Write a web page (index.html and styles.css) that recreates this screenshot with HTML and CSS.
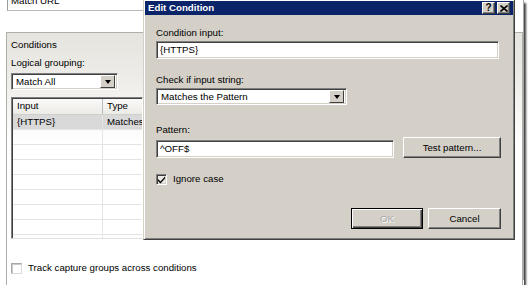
FILE: index.html
```html
<!DOCTYPE html>
<html lang="en">
<head>
  <meta charset="UTF-8" />
  <title>Edit Condition</title>
  <link rel="stylesheet" href="styles.css">
</head>
<body>
  <div class="screen">
    <!-- Rule editor behind the dialog -->
    <div class="window">
      <div class="match-url"><span>Match URL</span></div>

      <div class="group">
        <div class="group-title">Conditions</div>
        <div class="label">Logical grouping:</div>
        <div class="select select-small">
          <span class="select-text">Match All</span>
          <span class="drop"><span class="arrow"></span></span>
        </div>

        <div class="grid">
          <div class="grid-row grid-head">
            <div class="cell cell-input">Input</div>
            <div class="cell">Type</div>
          </div>
          <div class="grid-row grid-sel">
            <div class="cell cell-input">{HTTPS}</div>
            <div class="cell">Matches</div>
          </div>
          <div class="grid-row"><div class="cell cell-input"></div><div class="cell"></div></div>
          <div class="grid-row"><div class="cell cell-input"></div><div class="cell"></div></div>
          <div class="grid-row"><div class="cell cell-input"></div><div class="cell"></div></div>
          <div class="grid-row"><div class="cell cell-input"></div><div class="cell"></div></div>
          <div class="grid-row"><div class="cell cell-input"></div><div class="cell"></div></div>
          <div class="grid-row"><div class="cell cell-input"></div><div class="cell"></div></div>
          <div class="grid-row"><div class="cell cell-input"></div><div class="cell"></div></div>
          <div class="grid-row"><div class="cell cell-input"></div><div class="cell"></div></div>
        </div>

        <div class="check-row track">
          <span class="check check-off"></span>
          <span>Track capture groups across conditions</span>
        </div>
      </div>
    </div>

    <!-- Modal dialog -->
    <div class="dialog">
      <div class="titlebar">
        <span class="title">Edit Condition</span>
        <span class="tb-btn tb-help">?</span>
        <span class="tb-btn tb-close">
          <svg width="8" height="7" viewBox="0 0 8 7"><path d="M0.5 0.5 L7.5 6.5 M7.5 0.5 L0.5 6.5" stroke="#000" stroke-width="1.6"/></svg>
        </span>
      </div>
      <div class="dialog-body">
        <div class="label first">Condition input:</div>
        <div class="textbox tb-wide">{HTTPS}</div>

        <div class="label gap-check">Check if input string:</div>
        <div class="select select-mid">
          <span class="select-text">Matches the Pattern</span>
          <span class="drop"><span class="arrow"></span></span>
        </div>

        <div class="label gap-pattern">Pattern:</div>
        <div class="pattern-row">
          <div class="textbox tb-pattern">^OFF$</div>
          <button class="btn btn-test">Test pattern...</button>
        </div>

        <div class="check-row ignore">
          <span class="check check-on">
            <svg width="9" height="9" viewBox="0 0 9 9"><path d="M1 4 L3.5 6.5 L8 1.5 L8 3.5 L3.5 8.5 L1 6 Z" fill="#000"/></svg>
          </span>
          <span>Ignore case</span>
        </div>

        <div class="actions">
          <button class="btn btn-ok">OK</button>
          <button class="btn btn-cancel">Cancel</button>
        </div>
      </div>
    </div>
  </div>
</body>
</html>
```

FILE: styles.css
```css
body {
  margin: 0;
  background-color: #fff;
  font-family: "Liberation Sans", Arial, sans-serif;
  font-size: 9.7px;
  color: #000;
}
.screen {
  position: relative;
  width: 524px;
  height: 285px;
  background-color: #fff;
  overflow: hidden;
  box-shadow: 2px 3px 2px rgba(0, 0, 0, 0.75);
}
.window {
  width: 517px;
  height: 285px;
  padding-left: 6px;
  border-right: 1px solid #a7a7a7;
}
.match-url {
  margin: -5px 0 0 1px;
  width: 300px;
  height: 15px;
  border-left: 1px solid #9c9c9c;
  border-bottom: 1px solid #b8b8b8;
  padding-left: 3px;
  line-height: 12px;
}
.group {
  margin-top: 21px;
  height: 241px;
  padding: 6px 0 5px 4px;
  border: 1px solid #b0aea8;
  background: linear-gradient(#e6e4de 0, #ecebe7 40px, #fff 110px);
}
.group-title, .label {
  line-height: 12px;
  height: 12px;
  white-space: nowrap;
}
.group .label {
  margin-top: 6px;
}

/* combo boxes */
.select {
  display: flex;
  align-items: center;
  background-color: #fff;
  border: 1px solid;
  border-color: #808080 #fff #fff #808080;
  box-shadow: inset 1px 1px #404040, inset -1px -1px #d4d0c8;
  padding: 2px;
  box-sizing: border-box;
}
.select-text {
  flex: 1;
  padding-left: 2px;
  line-height: 11px;
  white-space: nowrap;
}
.select-small {
  margin-top: 4px;
  width: 107px;
  height: 17px;
}
.select-mid {
  margin-top: 2px;
  width: 191px;
  height: 17px;
}
.drop {
  width: 13px;
  height: 11px;
  background-color: #d4d0c8;
  border: 1px solid;
  border-color: #fff #404040 #404040 #fff;
  display: flex;
  align-items: center;
  justify-content: center;
}
.arrow {
  width: 0;
  height: 0;
  border-left: 3.5px solid transparent;
  border-right: 3.5px solid transparent;
  border-top: 4px solid #000;
}

/* conditions list */
.grid {
  margin-top: 7px;
  width: 132px;
  height: 142px;
  box-sizing: border-box;
  border: 1px solid;
  border-color: #808080 #fff #e0e0e0 #808080;
  box-shadow: inset 1px 1px #404040;
  padding: 1px 0 0 1px;
  overflow: hidden;
}
.grid-row {
  display: flex;
  height: 15px;
  border-bottom: 1px solid #e4e4e4;
  box-sizing: border-box;
  line-height: 14px;
  white-space: nowrap;
}
.grid-head {
  height: 16px;
  background: linear-gradient(#fafafa, #ecebe6);
  border-bottom: 1px solid #cfcfcf;
}
.grid-head .cell-input {
  border-right-color: #bdbdbd;
}
.grid-sel {
  background-color: #d9d9d9;
}
.cell {
  padding-left: 4px;
  overflow: hidden;
}
.cell-input {
  width: 85px;
  flex: none;
  border-right: 1px solid #e4e4e4;
}

/* checkboxes */
.check-row {
  display: flex;
  align-items: center;
  gap: 6px;
  height: 12px;
  line-height: 12px;
  white-space: nowrap;
}
.track {
  margin-top: 23px;
}
.check {
  width: 11px;
  height: 11px;
  box-sizing: border-box;
  border: 1px solid;
  border-color: #808080 #fff #fff #808080;
  box-shadow: inset 1px 1px #404040, inset -1px -1px #d4d0c8;
  display: flex;
  align-items: center;
  justify-content: center;
  flex: none;
}
.check-off {
  background-color: #fff;
  border-color: #a8a8a8 #d8d8d8 #d8d8d8 #a8a8a8;
  box-shadow: inset 1px 1px #c8c8c8;
}
.check-on {
  background-color: #ecebe8;
}

/* dialog */
.dialog {
  position: absolute;
  left: 143px;
  top: -1px;
  width: 372px;
  height: 241px;
  box-sizing: border-box;
  background-color: #d4d0c8;
  border: 1px solid;
  border-color: #d4d0c8 #404040 #404040 #d4d0c8;
  box-shadow: inset 1px 1px #fff, inset -1px -1px #808080;
  padding: 1px;
}
.titlebar {
  height: 14px;
  background-color: #0a246a;
  display: flex;
  align-items: center;
  padding: 0 3px 0 3px;
  gap: 2px;
}
.title {
  flex: 1;
  color: #fff;
  font-weight: bold;
  line-height: 14px;
}
.tb-btn {
  width: 13px;
  height: 12px;
  box-sizing: border-box;
  background-color: #d4d0c8;
  border: 1px solid;
  border-color: #fff #404040 #404040 #fff;
  box-shadow: inset -1px -1px #808080;
  font-size: 10px;
  font-weight: bold;
  line-height: 10px;
  text-align: center;
  display: flex;
  align-items: center;
  justify-content: center;
}
.tb-close {
  margin-left: 0;
}
.dialog-body {
  padding: 0 12px 0 11px;
}
.dialog-body .first {
  margin-top: 12px;
}
.textbox {
  margin-top: 2px;
  height: 18px;
  box-sizing: border-box;
  background-color: #fff;
  border: 1px solid;
  border-color: #808080 #fff #fff #808080;
  box-shadow: inset 1px 1px #404040, inset -1px -1px #d4d0c8;
  padding: 0 3px;
  line-height: 16px;
}
.tb-wide {
  width: 343px;
}
.gap-check {
  margin-top: 15px;
}
.gap-pattern {
  margin-top: 19px;
}
.pattern-row {
  display: flex;
  align-items: flex-end;
  justify-content: space-between;
  margin-top: 1px;
}
.tb-pattern {
  width: 238px;
}
.btn {
  font-family: inherit;
  font-size: inherit;
  color: #000;
  background-color: #d4d0c8;
  border: 1px solid;
  border-color: #fff #404040 #404040 #fff;
  box-shadow: inset -1px -1px #808080;
  height: 21px;
  padding: 0;
}
.btn-test {
  width: 98px;
}
.ignore {
  margin-top: 15px;
}
.actions {
  display: flex;
  justify-content: flex-end;
  gap: 5px;
  margin-top: 23px;
}
.btn-ok {
  width: 72px;
  color: #a8a8a8;
  border: 1px solid #000;
  box-shadow: inset 1px 1px #fff, inset -1px -1px #404040, inset -2px -2px #808080;
  text-shadow: 1px 1px #fff;
}
.btn-cancel {
  width: 73px;
}
```
